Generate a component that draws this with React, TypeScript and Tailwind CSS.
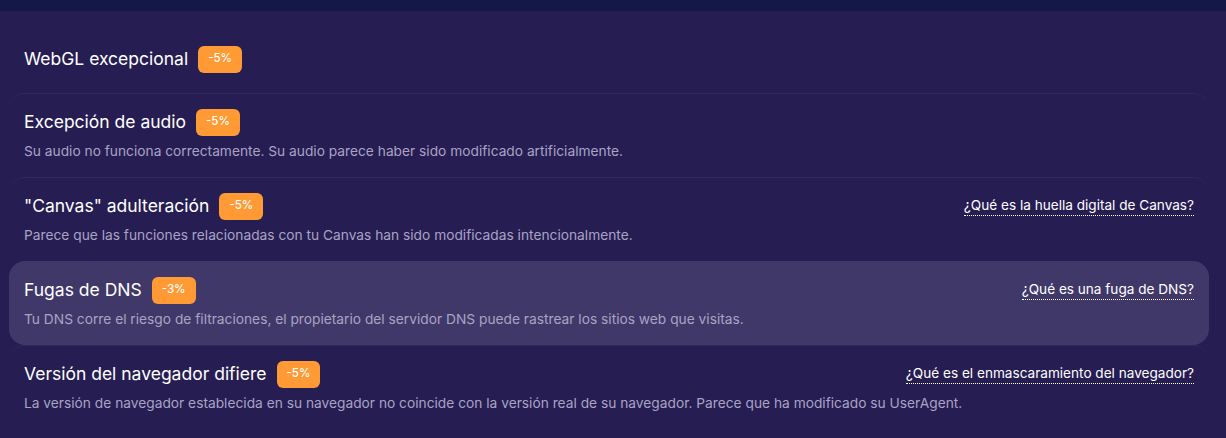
import React from 'react';

type Item = {
  title: string;
  badge: string;
  desc?: string;
  link?: string;
  active?: boolean;
};

const ITEMS: Item[] = [
  { title: 'WebGL excepcional', badge: '-5%' },
  {
    title: 'Excepción de audio',
    badge: '-5%',
    desc: 'Su audio no funciona correctamente. Su audio parece haber sido modificado artificialmente.',
  },
  {
    title: '"Canvas" adulteración',
    badge: '-5%',
    desc: 'Parece que las funciones relacionadas con tu Canvas han sido modificadas intencionalmente.',
    link: '¿Qué es la huella digital de Canvas?',
  },
  {
    title: 'Fugas de DNS',
    badge: '-3%',
    desc: 'Tu DNS corre el riesgo de filtraciones, el propietario del servidor DNS puede rastrear los sitios web que visitas.',
    link: '¿Qué es una fuga de DNS?',
    active: true,
  },
  {
    title: 'Versión del navegador difiere',
    badge: '-5%',
    desc: 'La versión de navegador establecida en su navegador no coincide con la versión real de su navegador. Parece que ha modificado su UserAgent.',
    link: '¿Qué es el enmascaramiento del navegador?',
  },
];

const App = () => {
  return (
    <div className="w-[1226px] h-[438px] overflow-hidden bg-[#261d53] font-['Inter',sans-serif]">
      {/* top strip of the page header */}
      <div className="h-[11px] bg-[#141849]" />

      <div className="pt-[20px] pl-[9px] pr-[17px]">
        {ITEMS.map((item, i) => (
          <div
            key={i}
            className={
              'rounded-2xl px-[15px] ' +
              (i === 0 ? 'pt-[14px] pb-[20px] ' : 'pt-[14px] pb-[16px] border-t ') +
              (item.active ? 'bg-[#41386a] border-transparent' : 'border-[#31285f]')
            }
          >
            <div className="flex items-center justify-between h-[28px]">
              <div className="flex items-center gap-[10px]">
                <span className="text-white text-[17.5px] leading-[24px]">{item.title}</span>
                <span className="bg-[#ff9a35] text-white text-[11.5px] font-medium rounded-md h-[27px] px-[10px] flex items-center">
                  {item.badge}
                </span>
              </div>
              {item.link && (
                <a className="text-white text-[13.6px] leading-[18px] border-b border-dotted border-white pb-[1px] cursor-pointer">
                  {item.link}
                </a>
              )}
            </div>
            {item.desc && (
              <p className="text-[#a9a3c3] text-[13.75px] leading-[20px] mt-[5px]">{item.desc}</p>
            )}
          </div>
        ))}
      </div>
    </div>
  );
};

export default App;
